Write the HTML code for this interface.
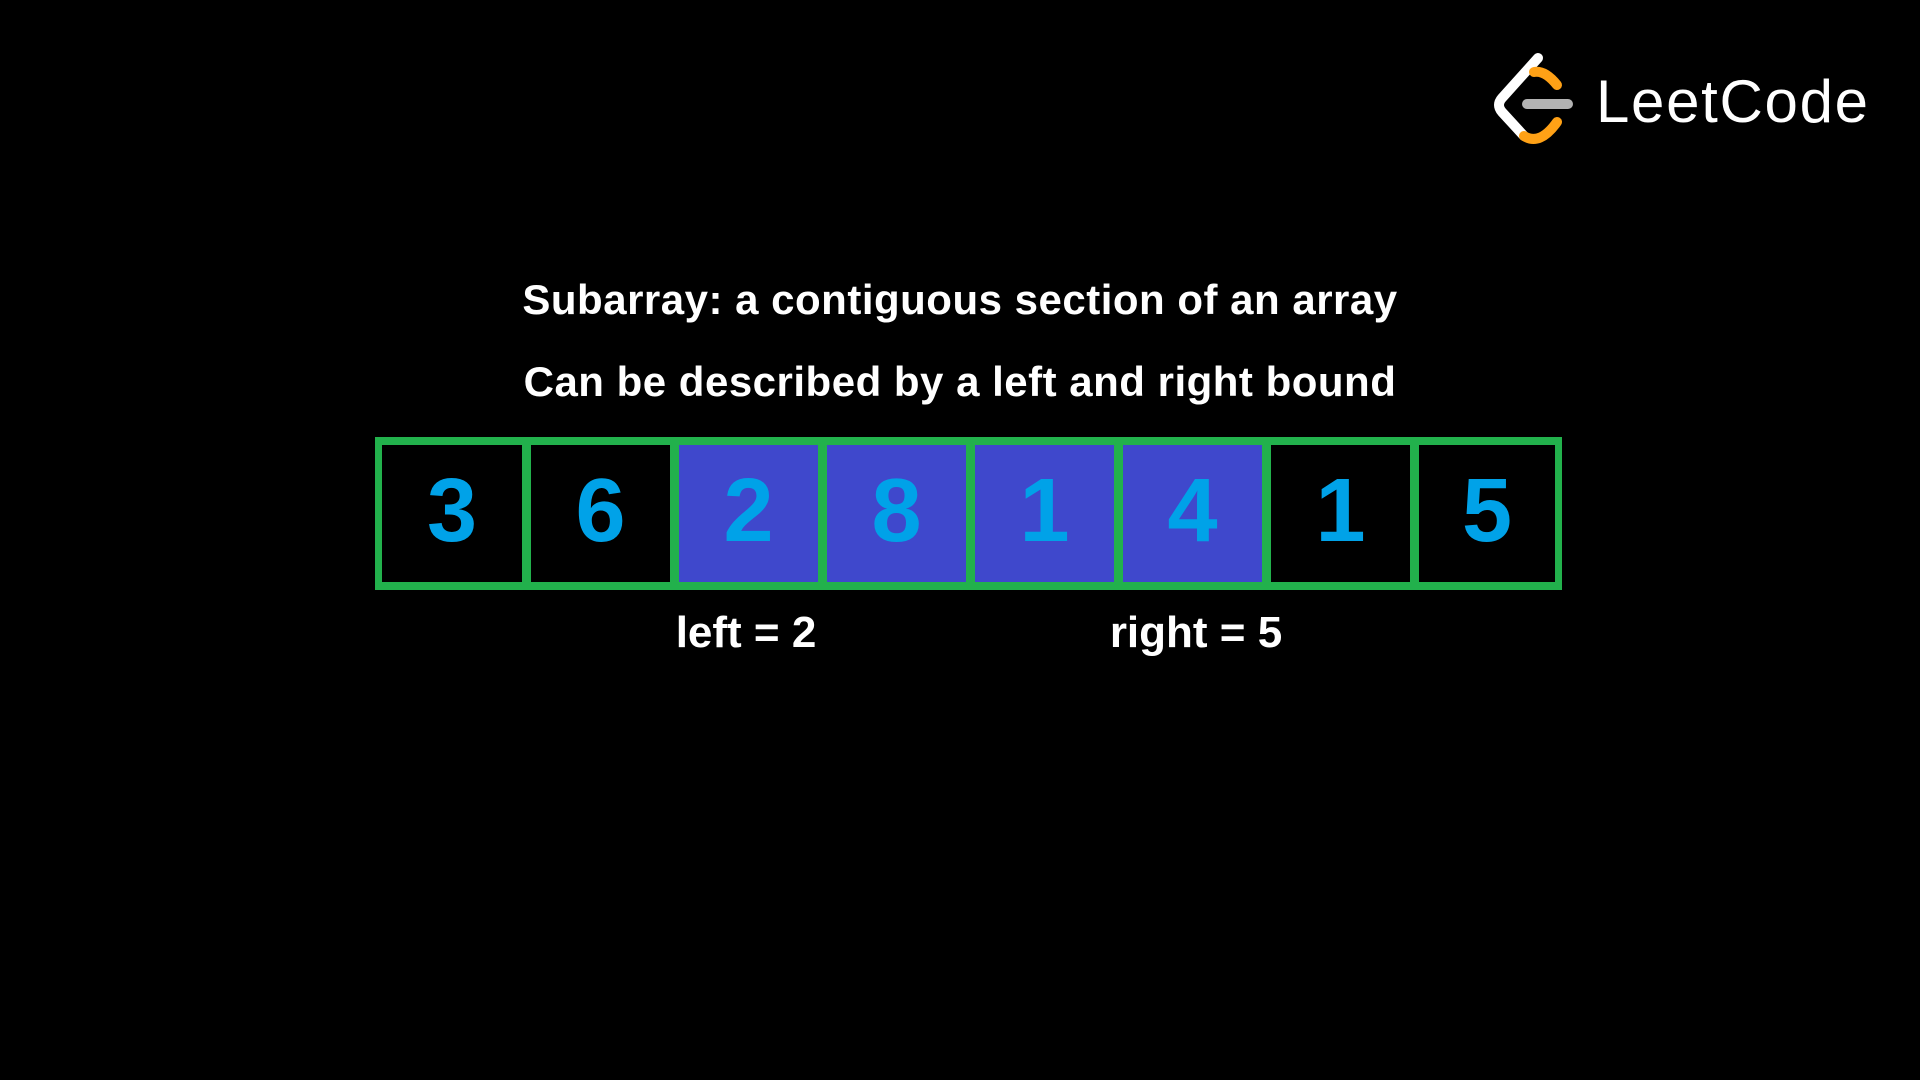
<!DOCTYPE html>
<html><head><style>
body{margin:0;width:1920px;height:1080px;background:#000;overflow:hidden;position:relative;font-family:"Liberation Sans",sans-serif}
.t{position:absolute;left:0;width:1920px;text-align:center;color:#fff;font-weight:bold;font-size:42px;letter-spacing:0.5px}
.arr{position:absolute;left:375px;top:437px;width:1187px;height:153px;background:#22b14c}
.c{position:absolute;top:8px;height:137px;background:#000;color:#00a2e8;font-weight:bold;font-size:90px;text-align:center;line-height:132px}
.c.b{background:#3f48cc}
.l{position:absolute;color:#fff;font-weight:bold;font-size:44px;transform:translateX(-50%);white-space:nowrap}
</style></head><body>
<svg style="position:absolute;left:0;top:0" width="1920" height="1080">
<path d="M1538 58 L1502 98 Q1496 105 1502 112 L1524 136" stroke="#fff" stroke-width="10" fill="none" stroke-linecap="round"/>
<path d="M1534 72 Q1545 70 1557 85" stroke="#ffa116" stroke-width="10" fill="none" stroke-linecap="round"/>
<path d="M1524 136 Q1540 146 1557 122" stroke="#ffa116" stroke-width="10" fill="none" stroke-linecap="round"/>
<path d="M1527 104 L1568 104" stroke="#b3b3b3" stroke-width="10" stroke-linecap="round"/>
<text x="1596" y="122" fill="#fff" font-family="Liberation Sans" font-size="60" textLength="272">LeetCode</text>
</svg>
<div class="t" style="top:276px">Subarray: a contiguous section of an array</div>
<div class="t" style="top:358px">Can be described by a left and right bound</div>
<div class="arr">
<div class="c" style="left:7px;width:140px">3</div>
<div class="c" style="left:156px;width:139px">6</div>
<div class="c b" style="left:304px;width:139px">2</div>
<div class="c b" style="left:452px;width:139px">8</div>
<div class="c b" style="left:600px;width:139px">1</div>
<div class="c b" style="left:748px;width:139px">4</div>
<div class="c" style="left:896px;width:139px">1</div>
<div class="c" style="left:1044px;width:136px">5</div>
</div>
<div class="l" style="left:746px;top:608px">left = 2</div>
<div class="l" style="left:1196px;top:608px">right = 5</div>
</body></html>
